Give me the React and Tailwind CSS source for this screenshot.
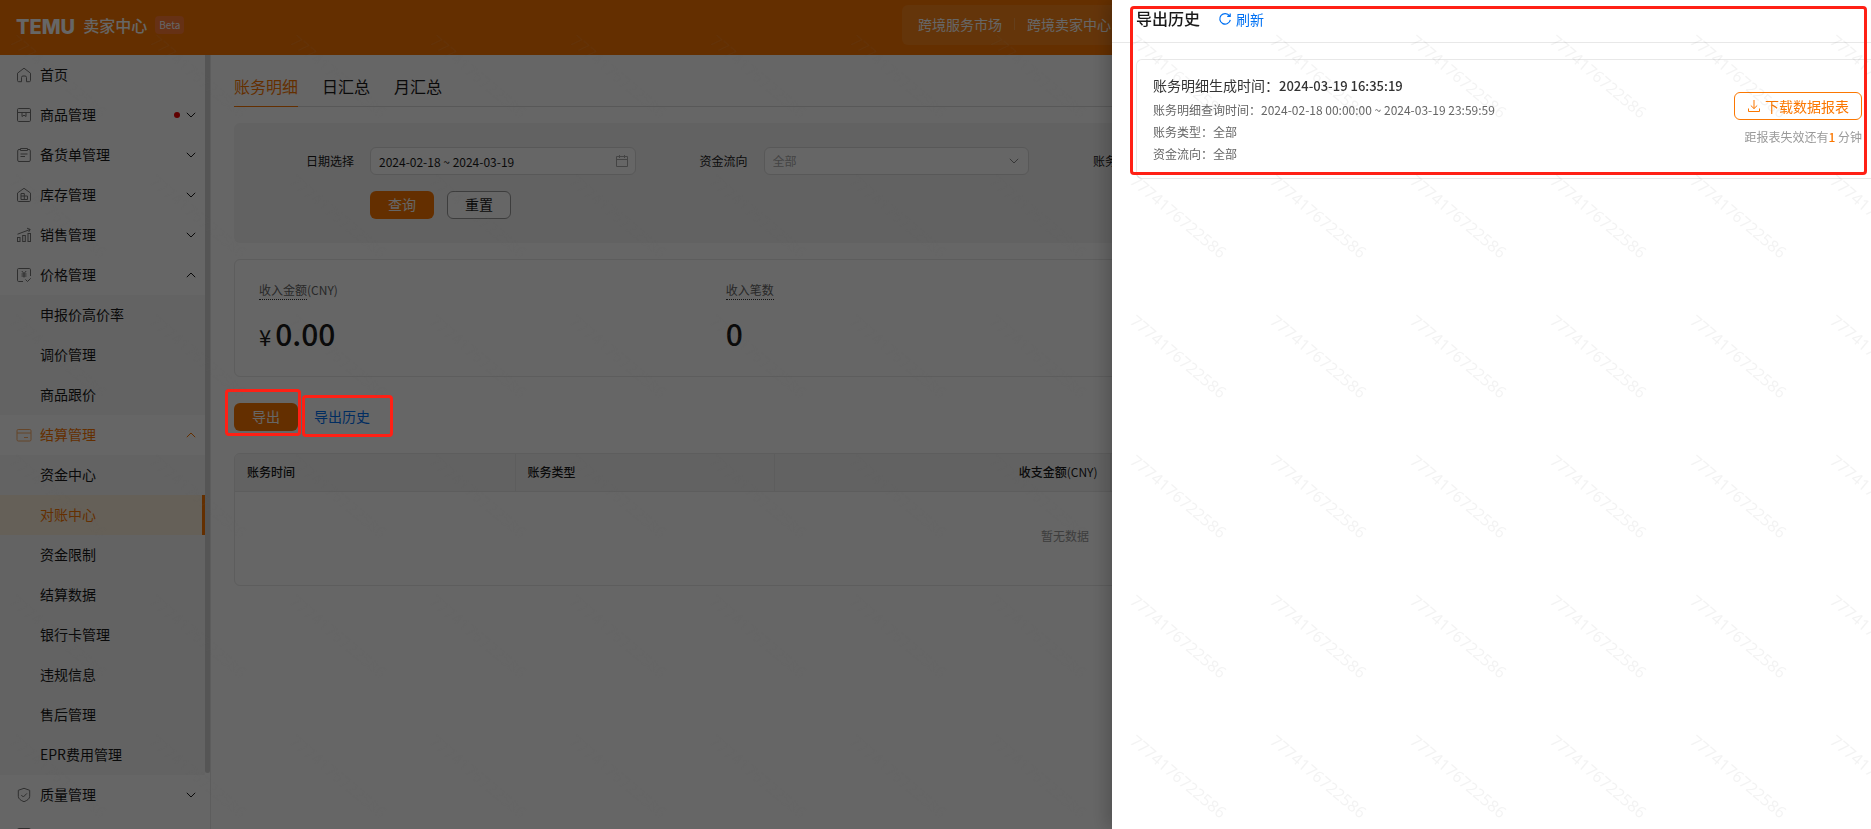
import { useState } from "react";

const MENU = [
  { name: "首页", icon: "home" },
  { name: "商品管理", icon: "goods", dot: true, children: [] },
  { name: "备货单管理", icon: "order", children: [] },
  { name: "库存管理", icon: "stock", children: [] },
  { name: "销售管理", icon: "sales", children: [] },
  { name: "价格管理", icon: "price", open: true, children: ["申报价高价率", "调价管理", "商品跟价"] },
  {
    name: "结算管理",
    icon: "settle",
    open: true,
    active: true,
    children: ["资金中心", "对账中心", "资金限制", "结算数据", "银行卡管理", "违规信息", "售后管理", "EPR费用管理"],
  },
  { name: "质量管理", icon: "quality", children: [] },
];

const TABS = ["账务明细", "日汇总", "月汇总"];
const WATERMARK = "7774176722586";
const WATERMARK_CELLS = Array.from({ length: 84 }, (_, i) => i);

const ICON_SHAPES = {
  home: <path d="M1.5 6.2 8 1.2l6.5 5v7.3a1.2 1.2 0 0 1-1.2 1.2h-2.8v-4.2a1.5 1.5 0 0 0-1.5-1.5H7a1.5 1.5 0 0 0-1.5 1.5v4.2H2.7a1.2 1.2 0 0 1-1.2-1.2z" />,
  goods: (
    <>
      <rect x="1.5" y="1.5" width="13" height="13" rx="1.2" />
      <path d="M1.5 5.5h13M6 5.5v4l2-1.3 2 1.3v-4" />
    </>
  ),
  order: (
    <>
      <path d="M4.5 2.5H3a1.3 1.3 0 0 0-1.3 1.3v9.4A1.3 1.3 0 0 0 3 14.5h10a1.3 1.3 0 0 0 1.3-1.3V3.8A1.3 1.3 0 0 0 13 2.5h-1.5" />
      <path d="M4.5 1.5h7v2h-7zM4.5 7h7M4.5 9.500h4.5" />
    </>
  ),
  stock: (
    <>
      <path d="M1.5 6 8 1.3 14.5 6v7.3a1.2 1.2 0 0 1-1.2 1.2H2.7a1.2 1.2 0 0 1-1.2-1.2z" />
      <path d="M5 9h6.5v3.5H5zM5 9V6.500h3.300v6" />
    </>
  ),
  sales: (
    <>
      <rect x="1.5" y="10.5" width="2.5" height="4" />
      <rect x="6.7" y="8.5" width="2.6" height="6" />
      <rect x="12" y="6.5" width="2.5" height="8" />
      <path d="M1.5 7.2 14 2.5M11 1.2l3.200 1.200-1.500 2.600" />
    </>
  ),
  price: (
    <>
      <path d="M7 14.5H2.7a1.2 1.2 0 0 1-1.2-1.2V2.7a1.2 1.2 0 0 1 1.2-1.2h10.6a1.2 1.2 0 0 1 1.2 1.2V9" />
      <path d="m5.800 4 2.200 2.500L10.200 4M8 6.500v4M5.500 7h5M5.500 9h5M9.500 12.500l2 2 3.200-3.200" />
    </>
  ),
  settle: (
    <>
      <rect x="1" y="2.5" width="14" height="11.5" rx="1.2" />
      <path d="M1 6h14M8 10.5h4" />
    </>
  ),
  quality: (
    <>
      <path d="M8 1.3 13.7 3.3v6c0 2.5-2.5 4.200-5.700 5.400-3.200-1.200-5.700-2.900-5.700-5.400v-6z" />
      <path d="m5.300 8 2 2 3.600-3.600" />
    </>
  ),
};

function MenuIcon({ name }) {
  return (
    <svg viewBox="0 0 16 16" className="h-4 w-4 shrink-0 opacity-60" fill="none" stroke="currentColor" strokeWidth="1">
      {ICON_SHAPES[name]}
    </svg>
  );
}

function Arrow({ up, className }) {
  return (
    <svg viewBox="0 0 10 6" className={className} fill="none" stroke="currentColor" strokeWidth="1">
      <path d={up ? "M.8 5.200 5 1l4.200 4.200" : "M.8 .8 5 5 9.200 .8"} />
    </svg>
  );
}

function MenuGroup({ item, current, onSelect }) {
  const [open, setOpen] = useState(!!item.open);

  return (
    <li>
      <button
        onClick={() => setOpen(!open)}
        className={`flex h-10 w-full items-center gap-2 pr-[9px] pl-4 text-left ${item.active ? "text-[#fb7701]" : "text-[#1a1a1a]"}`}
      >
        <MenuIcon name={item.icon} />
        <span className="flex-1 pb-0.5">{item.name}</span>
        {item.dot && <span className="-mr-0.5 h-[6px] w-[6px] rounded-full bg-[#f00000]" />}
        {item.children && <Arrow up={open} className="h-[6px] w-[10px]" />}
      </button>
      {open && item.children?.length > 0 && (
        <ul className="bg-[#f7f7f7]">
          {item.children.map((child) => (
            <li key={child}>
              <button
                onClick={() => onSelect(child)}
                className={`h-10 w-full pb-0.5 pl-10 text-left ${
                  child === current ? "border-r-3 border-[#fb7701] bg-[#fdf1dc] text-[#fb7701]" : "text-[#1a1a1a]"
                }`}
              >
                {child}
              </button>
            </li>
          ))}
        </ul>
      )}
    </li>
  );
}

function Sidebar() {
  const [current, setCurrent] = useState("对账中心");

  return (
    <aside className="flex w-[211px] shrink-0 overflow-hidden border-r border-[#e8e8e8] text-sm">
      <ul className="flex-1">
        {MENU.map((item) => (
          <MenuGroup key={item.name} item={item} current={current} onSelect={setCurrent} />
        ))}
        <li className="flex h-10 items-center pl-4 text-[#1a1a1a]">
          <MenuIcon name="goods" />
        </li>
      </ul>
      <div className="h-[718px] w-[5px] rounded-b-full bg-[#d4d4d4]" />
    </aside>
  );
}

function SelectField({ id, label }) {
  return (
    <div className="flex items-center gap-4 pr-3">
      <label htmlFor={id} className="w-[100px] shrink-0 text-right">{label}</label>
      <div className="relative flex-1">
        <select id={id} className="block h-7 w-full appearance-none rounded-md border border-[#dcdcdc] bg-white px-2 text-[#aaa]">
          <option>全部</option>
        </select>
        <Arrow className="pointer-events-none absolute top-[11px] right-[10px] h-[6px] w-[10px] text-[#888]" />
      </div>
    </div>
  );
}

function FilterPanel() {
  return (
    <form className="mt-4 rounded-md bg-[#f5f5f5] px-5 py-6 text-xs text-[#1a1a1a]" onSubmit={(e) => e.preventDefault()}>
      <div className="grid grid-cols-4">
        <div className="flex items-center gap-4 pr-3">
          <label htmlFor="date" className="w-[100px] shrink-0 text-right">日期选择</label>
          <div className="relative flex-1">
            <input
              id="date"
              readOnly
              value="2024-02-18 ~ 2024-03-19"
              className="block h-7 w-full rounded-md border border-[#dcdcdc] bg-white px-2"
            />
            <svg viewBox="0 0 12 12" className="absolute top-2 right-2 h-3 w-3 text-[#aaa]" fill="none" stroke="currentColor">
              <path d="M.5 1.500h11v10H.5zM.5 4.500h11M3.500 0v3M8.500 0v3" />
            </svg>
          </div>
        </div>
        <SelectField id="flow" label="资金流向" />
        <SelectField id="type" label="账务类型" />
      </div>
      <div className="mt-4 flex gap-[13px] pl-[116px] text-sm">
        <button className="h-7 w-16 rounded-md bg-[#fb7701] pb-0.5 text-white">查询</button>
        <button type="reset" className="h-7 w-16 rounded-md border border-[#999] bg-white pb-0.5">重置</button>
      </div>
    </form>
  );
}

function Stats() {
  return (
    <div className="mt-4 flex h-[118px] rounded-md border border-[#e8e8e8] pt-[22px] pr-8 pl-6 text-[#1a1a1a]">
      <div className="w-[30%]">
        <div className="text-xs leading-4 text-[#666]">
          <span className="border-b border-dotted border-[#333] pb-px">收入金额</span>(CNY)
        </div>
        <div className="mt-[10px] text-[30px] leading-[50px] font-medium">
          <span className="mr-1 text-[22px] font-normal">¥</span>0.00
        </div>
      </div>
      <div className="w-[30%]">
        <div className="text-xs leading-4 text-[#666]">
          <span className="border-b border-dotted border-[#333] pb-px">收入笔数</span>
        </div>
        <div className="mt-[10px] text-[30px] leading-[50px] font-medium">0</div>
      </div>
    </div>
  );
}

function BillTable() {
  return (
    <div className="mt-[22px] overflow-hidden rounded-md border border-[#e8e8e8] text-xs text-[#1a1a1a]">
      <table className="w-[1660px] table-fixed">
        <thead>
          <tr className="h-[37px] border-b border-[#e8e8e8] bg-[#f5f5f5]">
            <th className="w-[280px] px-3 text-left font-medium">账务时间</th>
            <th className="w-[259px] border-x border-[#e8e8e8] px-3 text-left font-medium">账务类型</th>
            <th className="w-[336px] border-r border-[#e8e8e8] px-3 text-right font-medium">
              收支金额<span className="font-normal">(CNY)</span>
            </th>
            <th />
          </tr>
        </thead>
        <tbody>
          <tr className="h-[94px]">
            <td colSpan={4} className="pb-1 text-center text-[#999]">暂无数据</td>
          </tr>
        </tbody>
      </table>
    </div>
  );
}

function ExportDrawer() {
  return (
    <div className="fixed inset-y-0 right-0 z-30 w-[759px] bg-white text-xs text-[#666] shadow-[-6px_0_16px_rgba(0,0,0,0.2)]">
      <div className="flex h-[43px] items-center border-b border-[#e8e8e8] pb-1 pl-6">
        <h2 className="pb-0.5 text-base font-medium text-[#1a1a1a]">导出历史</h2>
        <button className="ml-[18px] flex items-center gap-1 text-sm text-[#0071f3]">
          <svg viewBox="0 0 14 14" className="h-[14px] w-[14px]" fill="none" stroke="currentColor" strokeWidth="1.2">
            <path d="M11.500 3.900A5.300 5.300 0 1 0 12.300 7.800M12.200 1.400v3h-3" />
          </svg>
          刷新
        </button>
      </div>

      <div className="mt-4 ml-6 flex h-[120px] rounded-l-md border border-r-0 border-[#e8e8e8] pt-[15px] pr-[9px] pl-4">
        <div className="flex-1 leading-[22px]">
          <p className="mb-[3px] text-sm leading-5 text-[#333]">
            账务明细生成时间：<span className="text-[13px] font-medium">2024-03-19 16:35:19</span>
          </p>
          <p>账务明细查询时间：2024-02-18 00:00:00 ~ 2024-03-19 23:59:59</p>
          <p>账务类型：全部</p>
          <p>资金流向：全部</p>
        </div>
        <div className="flex flex-col items-end gap-[7px] pt-[17px]">
          <button className="flex h-7 w-32 items-center justify-center gap-1 rounded-md border border-[#fb7701] text-sm text-[#fb7701]">
            <svg viewBox="0 0 14 14" className="h-[14px] w-[14px]" fill="none" stroke="currentColor">
              <path d="M7 1v8.500M3.800 6.500 7 9.600l3.200-3.100M1.500 9.500v3h11v-3" />
            </svg>
            下载数据报表
          </button>
          <p className="leading-5 text-[#999]">
            距报表失效还有<span className="font-medium text-[#fb7701]">1</span> 分钟
          </p>
        </div>
      </div>
      <span className="absolute top-[6px] right-1 left-[18px] h-[169px] rounded-sm border-3 border-[#ff2015]" />
    </div>
  );
}

function Watermark() {
  return (
    <div aria-hidden="true" className="pointer-events-none fixed inset-0 z-40 overflow-hidden">
      <div className="grid w-[1960px] grid-cols-14 font-['Noto_Sans',sans-serif] text-base leading-4 text-[#666]/8">
        {WATERMARK_CELLS.map((i) => (
          <div key={i} className="h-[140px] pt-8 pl-[18px]">
            <div className="w-[119px] origin-top-left rotate-40">{WATERMARK}</div>
          </div>
        ))}
      </div>
    </div>
  );
}

export default function App() {
  const [tab, setTab] = useState(TABS[0]);

  return (
    <div className="flex h-screen flex-col overflow-hidden bg-white font-['Noto_Sans_CJK_SC',sans-serif]">
      <header className="flex h-[55px] shrink-0 bg-[#fb7701] text-white">
        <div className="flex w-[902px] shrink-0 items-center pl-4">
          <span className="pb-0.5 font-['Inter',sans-serif] text-xl font-extrabold">TEMU</span>
          <span className="ml-2 pb-1.5 text-base font-medium">卖家中心</span>
          <span className="mb-1.5 ml-2 rounded-sm bg-[#ff7a35] px-1 text-[10px] leading-[18px]">Beta</span>
        </div>
        <nav className="mt-[5px] flex h-10 flex-1 items-center rounded-l-md bg-white/10 pb-0.5 pl-4 text-sm whitespace-nowrap">
          <a href="#market">跨境服务市场</a>
          <span className="mx-3 h-3 w-px bg-white/20" />
          <a href="#seller">跨境卖家中心</a>
        </nav>
      </header>

      <div className="flex min-h-0 flex-1">
        <Sidebar />
        <main className="min-w-0 flex-1 px-[23px] pt-4">
          <div className="flex gap-6 border-b border-[#dcdcdc] text-base">
            {TABS.map((t) => (
              <button
                key={t}
                onClick={() => setTab(t)}
                className={`-mb-px h-9 border-b pb-1.5 ${t === tab ? "border-[#fb7701] text-[#fb7701]" : "border-transparent text-[#1a1a1a]"}`}
              >
                {t}
              </button>
            ))}
          </div>
          <FilterPanel />
          <Stats />
          <div className="mt-[26px] flex items-center gap-4 text-sm">
            <div className="relative">
              <button className="block h-7 w-16 rounded-md bg-[#fb7701] pb-0.5 text-white">导出</button>
              <span className="absolute -top-[14px] -right-[3px] -bottom-[5px] -left-[9px] z-30 rounded-sm border-3 border-[#ff2015]" />
            </div>
            <div className="relative">
              <button className="block h-7 pb-0.5 text-[#0071f3]">导出历史</button>
              <span className="absolute -top-[8px] -right-[23px] -bottom-[6px] -left-[12px] z-30 rounded-sm border-3 border-[#ff2015]" />
            </div>
          </div>
          <BillTable />
        </main>
      </div>

      <div className="fixed inset-0 z-20 bg-black/60" />
      <ExportDrawer />
      <Watermark />
    </div>
  );
}
